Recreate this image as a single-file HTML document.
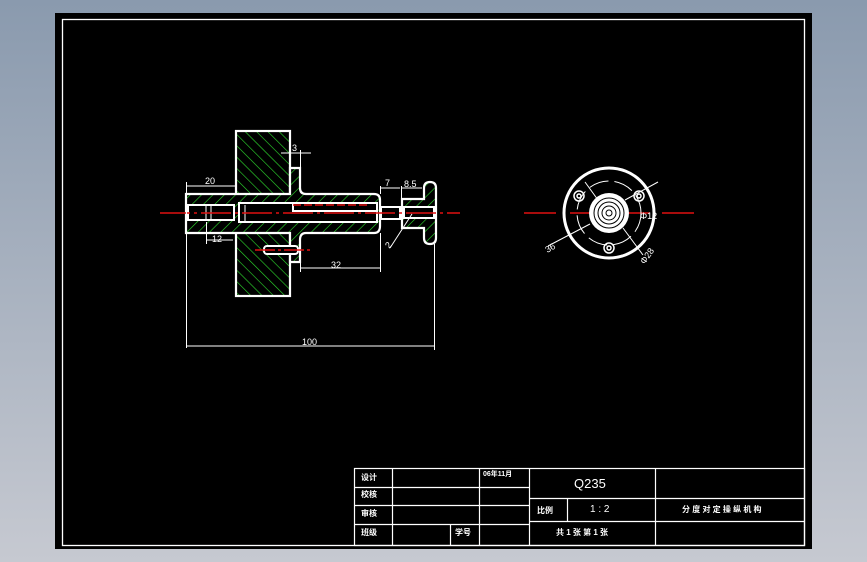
<!DOCTYPE html>
<html><head><meta charset="utf-8"><style>
html,body{margin:0;padding:0;width:867px;height:562px;overflow:hidden;background:linear-gradient(#8a9aae,#c6c9d1);}
svg{position:absolute;left:0;top:0;}
text{font-family:"Liberation Sans","Noto Sans CJK SC",sans-serif;fill:#fff;}
</style></head><body>
<svg width="867" height="562" viewBox="0 0 867 562">
<defs>
<pattern id="h" patternUnits="userSpaceOnUse" width="8" height="8" patternTransform="rotate(-45)">
<rect width="8" height="8" fill="#000"/><line x1="0" y1="0" x2="0" y2="8" stroke="#2ee02e" stroke-width="1.2"/>
</pattern>
<pattern id="h2" patternUnits="userSpaceOnUse" width="8" height="8" patternTransform="rotate(45)">
<rect width="8" height="8" fill="#000"/><line x1="0" y1="0" x2="0" y2="8" stroke="#2ee02e" stroke-width="1.2"/>
</pattern>
</defs>
<rect x="55" y="13" width="757" height="536" fill="#000"/>
<rect x="62.5" y="19.5" width="742" height="526" fill="none" stroke="#fff" stroke-width="1.3"/>

<!-- title block -->
<g stroke="#fff" stroke-width="1.2" fill="none">
<rect x="354.5" y="468.5" width="450" height="77"/>
<line x1="392.5" y1="468" x2="392.5" y2="545"/>
<line x1="479.5" y1="468" x2="479.5" y2="545"/>
<line x1="529.5" y1="468" x2="529.5" y2="545"/>
<line x1="655.5" y1="468" x2="655.5" y2="545"/>
<line x1="450.5" y1="524" x2="450.5" y2="545"/>
<line x1="354" y1="487.5" x2="529" y2="487.5"/>
<line x1="354" y1="505.5" x2="529" y2="505.5"/>
<line x1="354" y1="524.5" x2="529" y2="524.5"/>
<line x1="529" y1="498.5" x2="804" y2="498.5"/>
<line x1="529" y1="521.5" x2="804" y2="521.5"/>
<line x1="567.5" y1="498" x2="567.5" y2="521"/>
</g>
<g font-size="8" font-weight="bold">
<text x="361" y="480">设计</text>
<text x="361" y="497">校核</text>
<text x="361" y="516">审核</text>
<text x="361" y="535">班级</text>
<text x="455" y="535">学号</text>
<text x="483" y="476" font-size="7">06年11月</text>
<text x="537" y="513">比例</text>
<text x="556" y="535">共 1 张  第 1 张</text>
<text x="682" y="512">分 度 对 定 操 纵 机 构</text>
</g>
<text x="574" y="488" font-size="13">Q235</text>
<text x="590" y="512" font-size="10">1  :  2</text>

<!-- side view -->
<g stroke="#fff" stroke-width="2.2">
<rect x="236" y="131" width="54" height="165" fill="url(#h)"/>
<path fill="url(#h2)" d="M186 194 H290 V168 H300 V188 Q300 194 306 194 H374 Q380 194 380 200 V226 Q380 233 374 233 H306 Q300 233 300 240 V262 H290 V233 H186 Z"/>
<path fill="url(#h2)" d="M402 199 H424 V188 Q424 182 430 182 Q436 182 436 188 V238 Q436 244 430 244 Q424 244 424 238 V228 H402 Z"/>
</g>
<rect x="237" y="132" width="52" height="163" fill="none" stroke="none"/>
<g stroke="#fff" stroke-width="2" fill="#000">
<rect x="239" y="203" width="138" height="19"/>
<rect x="188" y="205" width="46" height="15"/>
<rect x="381" y="207" width="19" height="12"/>
<rect x="404" y="207" width="30" height="11"/>
<rect x="264" y="246" width="34" height="8" rx="3"/>
<rect x="293" y="203" width="84" height="8"/>
</g>
<g stroke="#fff" stroke-width="1" fill="none">
<line x1="206" y1="205" x2="206" y2="220"/><line x1="211" y1="205" x2="211" y2="220"/>
<line x1="245" y1="205" x2="245" y2="222"/>
</g>
<g stroke="#e01010" stroke-width="1.5">
<line x1="160" y1="213" x2="460" y2="213" stroke-dasharray="30,4,3,4"/>
<line x1="293" y1="205" x2="370" y2="205" stroke-dasharray="8,3"/>
<line x1="255" y1="250" x2="312" y2="250" stroke-dasharray="20,3,3,3"/>
</g>
<!-- dimensions -->
<g stroke="#fff" stroke-width="1" fill="none">
<line x1="186" y1="186" x2="236" y2="186"/><line x1="186.5" y1="182" x2="186.5" y2="348"/><line x1="236" y1="182" x2="236" y2="190"/>
<line x1="206" y1="240" x2="233" y2="240"/><line x1="206.5" y1="222" x2="206.5" y2="244"/>
<line x1="300" y1="268" x2="380" y2="268"/><line x1="380.5" y1="233" x2="380.5" y2="272"/><line x1="300.5" y1="262" x2="300.5" y2="272"/>
<line x1="281" y1="153" x2="311" y2="153"/><line x1="300.5" y1="150" x2="300.5" y2="168"/>
<line x1="380" y1="188" x2="400" y2="188"/><line x1="380.5" y1="186" x2="380.5" y2="194"/><line x1="401.5" y1="186" x2="401.5" y2="199"/>
<line x1="402" y1="188" x2="422" y2="188"/>
<line x1="186" y1="346" x2="434" y2="346"/><line x1="434.5" y1="244" x2="434.5" y2="350"/>
<line x1="390" y1="248" x2="412" y2="214"/>
</g>
<g font-size="9">
<text x="205" y="184">20</text>
<text x="212" y="242">12</text>
<text x="331" y="268">32</text>
<text x="292" y="151">3</text>
<text x="385" y="186">7</text>
<text x="404" y="187">8.5</text>
<text x="302" y="345">100</text>
<text x="385" y="248" transform="rotate(-50 388 244)">2</text>
</g>

<!-- front view -->
<g stroke="#e01010" stroke-width="1.5">
<line x1="524" y1="213" x2="556" y2="213"/><line x1="570" y1="213" x2="650" y2="213"/><line x1="662" y1="213" x2="694" y2="213"/>
</g>
<circle cx="609" cy="213" r="45" fill="none" stroke="#fff" stroke-width="3"/>
<circle cx="609" cy="213" r="32" fill="none" stroke="#fff" stroke-width="1" stroke-dasharray="20,6"/>
<circle cx="609" cy="213" r="20" fill="#fff"/>
<g fill="none" stroke="#000" stroke-width="1">
<circle cx="609" cy="213" r="15"/><circle cx="609" cy="213" r="11"/><circle cx="609" cy="213" r="7"/><circle cx="609" cy="213" r="3"/>
</g>
<g fill="none" stroke="#fff" stroke-width="1.5">
<circle cx="579" cy="196" r="5"/><circle cx="639" cy="196" r="5"/><circle cx="609" cy="248" r="5"/>
<circle cx="579" cy="196" r="2"/><circle cx="639" cy="196" r="2"/><circle cx="609" cy="248" r="2"/>
</g>
<g stroke="#fff" stroke-width="1">
<line x1="548" y1="246" x2="590" y2="224"/>
<line x1="623" y1="228" x2="643" y2="255"/>
<line x1="625" y1="200" x2="658" y2="182"/>
<line x1="585" y1="182" x2="598" y2="200"/>
</g>
<g font-size="9">
<text x="545" y="252" transform="rotate(-30 548 248)">36</text>
<text x="638" y="264" transform="rotate(-55 642 258)">Φ28</text>
<text x="640" y="219">Φ12</text>
</g>
</svg>
</body></html>
